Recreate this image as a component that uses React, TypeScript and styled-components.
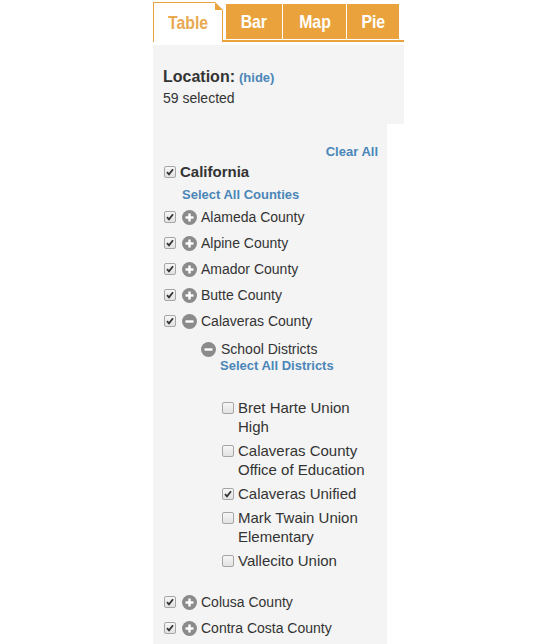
import styled, { createGlobalStyle } from "styled-components";

const ORANGE = "#eaa33c";
const BLUE = "#4a86b8";
const PANEL = "#f4f4f4";

const GlobalStyle = createGlobalStyle`
	body {
		margin: 0;
		background: #fff;
		font-family: "Liberation Sans", Arial, sans-serif;
		color: #333;
	}
`;

const Page = styled.div`
	width: 251px;
	padding: 2px 0 0 153px;
`;

const TabRow = styled.div`
	display: flex;
	height: 40px;
`;

const ActiveTab = styled.div`
	position: relative;
	width: 68px;
	display: flex;
	align-items: center;
	justify-content: center;
	background: #fff;
	border: 1px solid ${ORANGE};
	border-bottom: none;
	color: #e9a951;

	&::after {
		content: "";
		position: absolute;
		top: -1px;
		right: -1px;
		border-top: 8px solid #fff;
		border-left: 8px solid ${ORANGE};
	}
`;

const TabStrip = styled.div`
	flex: 1;
	display: flex;
	align-items: flex-end;
	gap: 1px;
	padding-left: 3px;
	border-bottom: 2px solid ${ORANGE};
`;

const Tab = styled.div<{ $width: number }>`
	width: ${(props) => props.$width}px;
	height: 35px;
	margin-bottom: 1px;
	display: flex;
	align-items: center;
	justify-content: center;
	background: ${ORANGE};
	color: #fff;
`;

// the tab font is a condensed bold face; squeeze the bold sans to match
const TabLabel = styled.span`
	display: inline-block;
	font-weight: bold;
	font-size: 19px;
	transform: scaleX(0.83);
`;

const LocationBox = styled.div`
	margin-top: 3px;
	padding: 22px 10px 16px;
	background: ${PANEL};
`;

const Title = styled.div`
	font-size: 16px;
	font-weight: bold;
	line-height: 20px;
`;

const Link = styled.span`
	color: ${BLUE};
	font-weight: bold;
	font-size: 13px;
`;

const HideLink = styled(Link)`
	margin-left: 4px;
`;

const Count = styled.div`
	font-size: 14px;
	line-height: 20px;
`;

const FilterPanel = styled.div`
	width: 214px;
	padding: 18px 9px 24px 11px;
	background: ${PANEL};
`;

const ClearAll = styled.div`
	text-align: right;
	line-height: 18px;
`;

const StateRow = styled.div`
	display: flex;
	align-items: center;
	gap: 4px;
	height: 21px;
	font-size: 15px;
	font-weight: bold;
`;

const SelectAll = styled(Link)<{ $indent: number }>`
	display: block;
	margin-left: ${(props) => props.$indent}px;
	line-height: 18px;
`;

const SelectCounties = styled(SelectAll)`
	margin-top: 4px;
`;

const SelectDistricts = styled(SelectAll)`
	line-height: 15px;
`;

const CountyRow = styled.div`
	display: flex;
	align-items: center;
	height: 26px;
	font-size: 14px;
`;

const Box = styled.span`
	box-sizing: border-box;
	flex: none;
	width: 12px;
	height: 12px;
	display: inline-flex;
	align-items: center;
	justify-content: center;
	border: 1px solid #a6a6a6;
	border-radius: 2px;
	background: linear-gradient(#f6f6f6, #e2e2e2);
`;

const Toggle = styled.span<{ $gap: number }>`
	flex: none;
	width: 15px;
	height: 15px;
	margin: 0 4px 0 ${(props) => props.$gap}px;
	border-radius: 50%;
	background: #8b8b8b;
	display: inline-flex;
	align-items: center;
	justify-content: center;
`;

const SchoolBlock = styled.div`
	padding-left: 37px;
`;

const SchoolHeader = styled.div`
	display: flex;
	align-items: center;
	height: 18px;
	margin-top: 6px;
	font-size: 14px;
`;

const DistrictList = styled.div`
	margin: 25px 0 19px 21px;
	display: flex;
	flex-direction: column;
	gap: 5px;
`;

const DistrictItem = styled.label`
	display: flex;
	align-items: flex-start;
	gap: 4px;
	font-size: 15px;
	line-height: 19px;

	& > span:first-child {
		margin-top: 4px;
	}
`;

function Check({ checked }: { checked: boolean }) {
	return (
		<Box>
			{checked ? (
				<svg width="8" height="8" viewBox="0 0 8 8">
					<path d="M1 4.2 L3 6.3 L7 1.3" fill="none" stroke="#333" strokeWidth="1.8" />
				</svg>
			) : null}
		</Box>
	);
}

function Expander({ open, gap }: { open: boolean; gap: number }) {
	return (
		<Toggle $gap={gap}>
			<svg width="9" height="9" viewBox="0 0 9 9">
				<rect x="0.5" y="3.3" width="8" height="2.4" fill="#fff" />
				{open ? null : <rect x="3.3" y="0.5" width="2.4" height="8" fill="#fff" />}
			</svg>
		</Toggle>
	);
}

const countiesBefore = ["Alameda County", "Alpine County", "Amador County", "Butte County"];
const countiesAfter = ["Colusa County", "Contra Costa County"];

const districts = [
	{ name: "Bret Harte Union High", checked: false },
	{ name: "Calaveras County Office of Education", checked: false },
	{ name: "Calaveras Unified", checked: true },
	{ name: "Mark Twain Union Elementary", checked: false },
	{ name: "Vallecito Union", checked: false },
];

function County({ name, open }: { name: string; open?: boolean }) {
	return (
		<CountyRow>
			<Check checked />
			<Expander open={!!open} gap={6} />
			{name}
		</CountyRow>
	);
}

export default function App() {
	return (
		<Page>
			<GlobalStyle />
			<TabRow>
				<ActiveTab><TabLabel>Table</TabLabel></ActiveTab>
				<TabStrip>
					<Tab $width={56}><TabLabel>Bar</TabLabel></Tab>
					<Tab $width={63}><TabLabel>Map</TabLabel></Tab>
					<Tab $width={52}><TabLabel>Pie</TabLabel></Tab>
				</TabStrip>
			</TabRow>

			<LocationBox>
				<Title>
					Location:<HideLink>(hide)</HideLink>
				</Title>
				<Count>59 selected</Count>
			</LocationBox>

			<FilterPanel>
				<ClearAll>
					<Link>Clear All</Link>
				</ClearAll>
				<StateRow>
					<Check checked />
					California
				</StateRow>
				<SelectCounties $indent={18}>Select All Counties</SelectCounties>

				{countiesBefore.map((name) => <County key={name} name={name} />)}
				<County name="Calaveras County" open />

				<SchoolBlock>
					<SchoolHeader>
						<Expander open gap={0} />
						<span style={{ marginLeft: 1 }}>School Districts</span>
					</SchoolHeader>
					<SelectDistricts $indent={19}>Select All Districts</SelectDistricts>
					<DistrictList>
						{districts.map((d) => (
							<DistrictItem key={d.name}>
								<Check checked={d.checked} />
								<span>{d.name}</span>
							</DistrictItem>
						))}
					</DistrictList>
				</SchoolBlock>

				{countiesAfter.map((name) => <County key={name} name={name} />)}
			</FilterPanel>
		</Page>
	);
}
